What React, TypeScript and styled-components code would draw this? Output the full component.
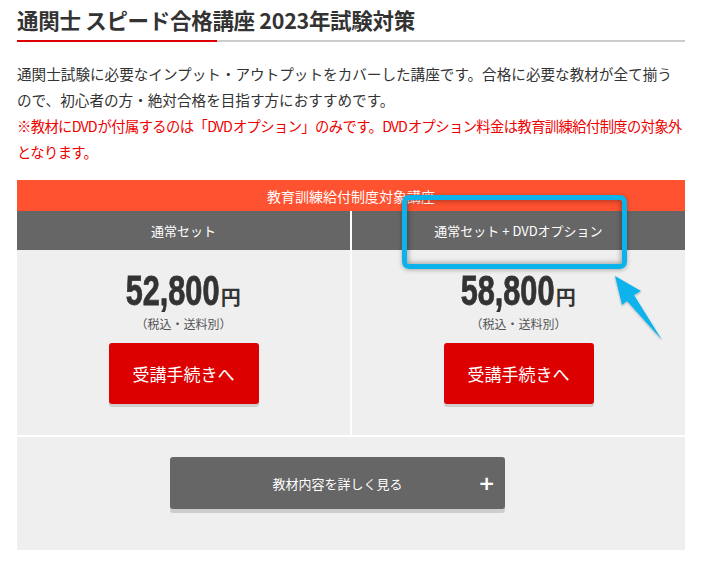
import styled, { createGlobalStyle } from "styled-components";

const GlobalStyle = createGlobalStyle`
  html, body {
    margin: 0;
    padding: 0;
    background: #fff;
  }
  body {
    font-family: "Noto Sans CJK JP", "Noto Sans", sans-serif;
    color: #333;
  }
`;

const Page = styled.div`
  width: 668px;
  padding: 6px 17px 0 17px;
`;

const Title = styled.h2`
  margin: 0;
  font-size: 21.5px;
  font-weight: 700;
  line-height: 28px;
  color: #333;
  letter-spacing: -0.3px;
`;

const TitleLine = styled.div`
  margin-top: 6px;
  height: 2px;
  background: #ccc;
  display: flex;
`;

const TitleAccent = styled.div`
  width: 200px;
  background: #dd0000;
`;

const Lead = styled.p`
  margin: 19px 0 0 0;
  font-size: 14.6px;
  line-height: 26px;
  color: #333;
  white-space: nowrap;
`;

const Note = styled.p`
  margin: 0;
  font-size: 14.3px;
  line-height: 26px;
  letter-spacing: -0.6px;
  color: #ee0000;
  white-space: nowrap;
`;

const Latin = styled.span`
  letter-spacing: -1px;
  margin-right: 1px;
`;

const PlanArea = styled.div`
  position: relative;
  margin-top: 15px;
`;

const Banner = styled.div`
  height: 31px;
  background: #ff5230;
  color: #fff;
  font-size: 14px;
  display: flex;
  align-items: center;
  justify-content: center;
`;

const PlanGrid = styled.div`
  display: grid;
  grid-template-columns: 1fr 1fr;
  column-gap: 2px;
  background: #fff;
`;

const PlanHead = styled.div`
  height: 39px;
  background: #666;
  color: #fff;
  font-size: 13px;
  display: flex;
  align-items: center;
  justify-content: center;
`;

const PlanBody = styled.div`
  background: #efefef;
  height: 185px;
  display: flex;
  flex-direction: column;
  align-items: center;
  padding-top: 23px;
  box-sizing: border-box;
`;

const Price = styled.div`
  display: flex;
  align-items: baseline;
  height: 36px;
  line-height: 36px;
  color: #333;
`;

const Amount = styled.span`
  display: inline-block;
  font-family: "Liberation Sans", "Arial", sans-serif;
  font-weight: 700;
  font-size: 42px;
  line-height: 36px;
  -webkit-text-stroke: 0.8px #333;
  transform: scaleX(0.73);
  transform-origin: right center;
  margin-left: -35px;
`;

const Yen = styled.span`
  font-size: 20px;
  font-weight: 700;
  margin-left: 1px;
`;

const Tax = styled.div`
  margin-top: 7px;
  font-size: 12px;
  line-height: 16px;
  color: #555;
`;

const ApplyButton = styled.button`
  margin-top: 11px;
  width: 150px;
  height: 61px;
  border: none;
  border-radius: 3px;
  background: #dd0000;
  color: #fff;
  font-family: "Noto Sans CJK JP", sans-serif;
  font-size: 17px;
  box-shadow: 0 3px 0 #cfcfcf;
  cursor: pointer;
`;

const MoreArea = styled.div`
  margin-top: 2px;
  background: #efefef;
  height: 113px;
  display: flex;
  justify-content: center;
  padding: 20px 27px 0 0;
  box-sizing: border-box;
`;

const MoreButton = styled.button`
  position: relative;
  width: 335px;
  height: 52px;
  border: none;
  border-radius: 3px;
  background: #666;
  color: #fff;
  font-family: "Noto Sans CJK JP", sans-serif;
  font-size: 13px;
  box-shadow: 0 4px 0 #cdcdcd;
  cursor: pointer;
`;

const PlusMark = styled.span`
  position: absolute;
  right: 10px;
  top: 50%;
  transform: translateY(-50%);
  font-family: "DejaVu Sans", sans-serif;
  font-weight: 700;
  font-size: 20px;
`;

const Highlight = styled.div`
  position: absolute;
  left: 385px;
  top: 15px;
  width: 225px;
  height: 74px;
  box-sizing: border-box;
  border: 5px solid #0bb3ea;
  border-radius: 7px;
  box-shadow: inset 0 0 6px rgba(0, 0, 0, 0.45), 0 1px 4px rgba(0, 0, 0, 0.3);
  pointer-events: none;
`;

const Arrow = styled.svg`
  position: absolute;
  left: 583px;
  top: 79px;
  width: 80px;
  height: 90px;
  overflow: visible;
  pointer-events: none;
`;

const plans = [
  { name: "通常セット", price: "52,800" },
  { name: "通常セット + DVDオプション", price: "58,800" },
];

const App = () => {
  return (
    <Page>
      <GlobalStyle />
      <Title>通関士 スピード合格講座 2023年試験対策</Title>
      <TitleLine>
        <TitleAccent />
      </TitleLine>
      <Lead>
        通関士試験に必要なインプット・アウトプットをカバーした講座です。合格に必要な教材が全て揃う
        <br />
        ので、初心者の方・絶対合格を目指す方におすすめです。
      </Lead>
      <Note>
        ※教材に<Latin>DVD</Latin>が付属するのは「<Latin>DVD</Latin>オプション」のみです。
        <Latin>DVD</Latin>オプション料金は教育訓練給付制度の対象外
        <br />
        となります。
      </Note>
      <PlanArea>
        <Banner>教育訓練給付制度対象講座</Banner>
        <PlanGrid>
          {plans.map((plan) => (
            <PlanHead key={plan.name}>{plan.name}</PlanHead>
          ))}
          {plans.map((plan) => (
            <PlanBody key={plan.price}>
              <Price>
                <Amount>{plan.price}</Amount>
                <Yen>円</Yen>
              </Price>
              <Tax>（税込・送料別）</Tax>
              <ApplyButton>受講手続きへ</ApplyButton>
            </PlanBody>
          ))}
        </PlanGrid>
        <MoreArea>
          <MoreButton>
            教材内容を詳しく見る
            <PlusMark>+</PlusMark>
          </MoreButton>
        </MoreArea>
        <Highlight />
        <Arrow viewBox="0 0 80 90">
          <defs>
            <filter id="arrowShadow" x="-30%" y="-30%" width="160%" height="160%">
              <feDropShadow dx="0" dy="1" stdDeviation="1.2" floodColor="#000" floodOpacity="0.3" />
            </filter>
          </defs>
          <polygon
            points="15,17 41,32 34,36 62,81 27,42 22,46"
            fill="#0bb3ea"
            filter="url(#arrowShadow)"
          />
        </Arrow>
      </PlanArea>
    </Page>
  );
};

export default App;
